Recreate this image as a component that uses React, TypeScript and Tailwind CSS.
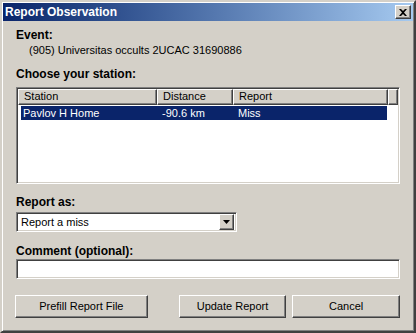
import React from "react";

const raised =
  "border border-t-white border-l-white border-r-[#404040] border-b-[#404040] shadow-[inset_-1px_-1px_0_#808080]";
const sunken =
  "border border-t-[#808080] border-l-[#808080] border-r-white border-b-white shadow-[inset_1px_1px_0_#404040,inset_-1px_-1px_0_#D4D0C8]";

const Label: React.FC<{ children: React.ReactNode; className?: string }> = ({ children, className }) => (
  <div className={`font-bold text-[12px] leading-[14px] text-black ${className || ""}`}>{children}</div>
);

const Button: React.FC<{ label: string; className?: string }> = ({ label, className }) => (
  <button
    className={`h-[23px] bg-[#D4D0C8] text-[11px] text-black flex items-center justify-center ${raised} ${className || ""}`}
  >
    {label}
  </button>
);

export default function App() {
  return (
    <div
      className="w-[416px] h-[333px] bg-[#D4D0C8] border-2 border-t-[#D4D0C8] border-l-[#D4D0C8] border-r-[#404040] border-b-[#404040] shadow-[inset_1px_1px_0_white,inset_-1px_-1px_0_#808080] p-[1px] flex flex-col"
      style={{ fontFamily: '"Liberation Sans", Arial, sans-serif' }}
    >
      {/* title bar */}
      <div className="h-[18px] bg-gradient-to-r from-[#0A246A] to-[#A6CAF0] flex items-center justify-between pl-[2px] pr-[2px]">
        <span className="text-white font-bold text-[12px] leading-none">Report Observation</span>
        <div className={`w-[16px] h-[14px] bg-[#D4D0C8] flex items-center justify-center ${raised}`}>
          <svg width="8" height="7" viewBox="0 0 8 7">
            <path d="M0 0 L2 0 L4 2 L6 0 L8 0 L5 3.5 L8 7 L6 7 L4 5 L2 7 L0 7 L3 3.5 Z" fill="black" />
          </svg>
        </div>
      </div>

      <div className="flex flex-col pl-[13px] pr-[13px]">
        <Label className="mt-[7px]">Event:</Label>
        <div className="mt-[2px] pl-[13px] text-[11px] leading-[13px] text-black">
          (905) Universitas occults 2UCAC 31690886
        </div>

        <Label className="mt-[10px]">Choose your station:</Label>
        <div className={`mt-[6px] h-[97px] bg-white ${sunken} p-[1px] flex flex-col`}>
          <div className="flex h-[16px] text-[11px] text-black">
            <div className={`w-[139px] bg-[#D4D0C8] ${raised} pl-[5px] leading-[13px]`}>Station</div>
            <div className={`w-[76px] bg-[#D4D0C8] ${raised} pl-[5px] leading-[13px]`}>Distance</div>
            <div className={`w-[155px] bg-[#D4D0C8] ${raised} pl-[5px] leading-[13px]`}>Report</div>
            <div className={`flex-1 bg-[#D4D0C8] ${raised}`}></div>
          </div>
          <div className="flex h-[14px] w-[366px] ml-[3px] mt-[1px] bg-[#0A246A] text-white text-[11px] leading-[14px]">
            <div className="w-[136px] pl-[2px]">Pavlov H Home</div>
            <div className="w-[76px] pl-[5px]">-90.6 km</div>
            <div className="flex-1 pl-[5px]">Miss</div>
          </div>
        </div>

        <Label className="mt-[11px]">Report as:</Label>
        <div className={`mt-[3px] w-[221px] h-[20px] bg-white ${sunken} flex items-center p-[2px]`}>
          <span className="flex-1 pl-[2px] text-[11px] text-black leading-none">Report a miss</span>
          <div className={`w-[15px] h-[16px] bg-[#D4D0C8] ${raised} flex items-center justify-center`}>
            <svg width="7" height="4" viewBox="0 0 7 4">
              <path d="M0 0 L7 0 L3.5 4 Z" fill="black" />
            </svg>
          </div>
        </div>

        <Label className="mt-[12px]">Comment (optional):</Label>
        <div className={`mt-[1px] h-[20px] bg-white ${sunken}`}></div>

        <div className="flex mt-[16px] -ml-[1px]">
          <Button label="Prefill Report File" className="w-[133px]" />
          <Button label="Update Report" className="w-[108px] ml-[31px]" />
          <Button label="Cancel" className="w-[108px] ml-[6px]" />
        </div>
      </div>
    </div>
  );
}
